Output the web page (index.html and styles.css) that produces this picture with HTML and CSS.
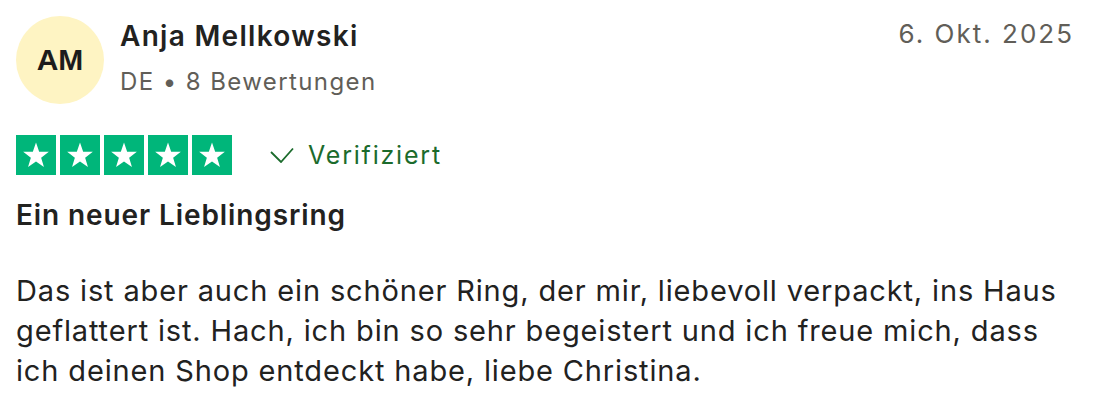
FILE: index.html
```html
<!DOCTYPE html>
<html lang="de">
<head>
  <meta charset="UTF-8">
  <meta name="viewport" content="width=device-width, initial-scale=1.0">
  <title>Bewertung</title>
  <link rel="stylesheet" href="styles.css">
</head>
<body>
  <article class="review">
    <div class="review-header">
      <div class="avatar">AM</div>
      <div class="reviewer">
        <div class="reviewer-name">Anja Mellkowski</div>
        <div class="reviewer-meta">DE &bull; 8 Bewertungen</div>
      </div>
      <time class="review-date">6. Okt. 2025</time>
    </div>

    <div class="rating-row">
      <div class="stars">
        <span class="star"><svg viewBox="0 0 40 40"><polygon points="20,7.5 23.17,16.63 32.84,16.83 25.14,22.67 27.94,31.92 20,26.4 12.06,31.92 14.86,22.67 7.16,16.83 16.83,16.63"/></svg></span>
        <span class="star"><svg viewBox="0 0 40 40"><polygon points="20,7.5 23.17,16.63 32.84,16.83 25.14,22.67 27.94,31.92 20,26.4 12.06,31.92 14.86,22.67 7.16,16.83 16.83,16.63"/></svg></span>
        <span class="star"><svg viewBox="0 0 40 40"><polygon points="20,7.5 23.17,16.63 32.84,16.83 25.14,22.67 27.94,31.92 20,26.4 12.06,31.92 14.86,22.67 7.16,16.83 16.83,16.63"/></svg></span>
        <span class="star"><svg viewBox="0 0 40 40"><polygon points="20,7.5 23.17,16.63 32.84,16.83 25.14,22.67 27.94,31.92 20,26.4 12.06,31.92 14.86,22.67 7.16,16.83 16.83,16.63"/></svg></span>
        <span class="star"><svg viewBox="0 0 40 40"><polygon points="20,7.5 23.17,16.63 32.84,16.83 25.14,22.67 27.94,31.92 20,26.4 12.06,31.92 14.86,22.67 7.16,16.83 16.83,16.63"/></svg></span>
      </div>
      <div class="verified">
        <svg class="check" viewBox="0 0 24 16"><path d="M1 5l10 10L23 1.5"/></svg>
        Verifiziert
      </div>
    </div>

    <h2 class="review-title">Ein neuer Lieblingsring</h2>
    <p class="review-text">Das ist aber auch ein schöner Ring, der mir, liebevoll verpackt, ins Haus geflattert ist. Hach, ich bin so sehr begeistert und ich freue mich, dass ich deinen Shop entdeckt habe, liebe Christina.</p>
  </article>
</body>
</html>
```

FILE: styles.css
```css
body {
  margin: 0;
  background: #fff;
  font-family: 'Inter', 'Liberation Sans', sans-serif;
  color: #22221f;
}

.review {
  padding: 16px 22px 0 16px;
}

.review-header {
  display: flex;
  align-items: flex-start;
  gap: 16px;
}

.avatar {
  width: 88px;
  height: 88px;
  border-radius: 50%;
  background: #fef4c3;
  display: flex;
  align-items: center;
  justify-content: center;
  font-family: 'Liberation Sans', Arial, sans-serif;
  font-weight: bold;
  font-size: 30px;
  color: #1c1c1c;
  flex-shrink: 0;
}

.reviewer-name {
  font-size: 28px;
  font-weight: 600;
  line-height: 40px;
  letter-spacing: 1.3px;
}

.reviewer-meta {
  margin-top: 10px;
  font-size: 24px;
  line-height: 32px;
  letter-spacing: 1.4px;
  color: #615e58;
}

.review-date {
  margin-left: auto;
  font-size: 26px;
  line-height: 36px;
  letter-spacing: 2px;
  color: #615e58;
}

.rating-row {
  display: flex;
  align-items: center;
  gap: 38px;
  margin-top: 31px;
}

.stars {
  display: flex;
  gap: 4px;
}

.star {
  width: 40px;
  height: 40px;
  background: #00b67a;
  display: block;
}

.star svg {
  width: 40px;
  height: 40px;
  display: block;
  fill: #fff;
}

.verified {
  display: flex;
  align-items: center;
  gap: 14px;
  font-size: 25px;
  letter-spacing: 1.8px;
  color: #1b6b2c;
}

.check {
  width: 24px;
  height: 16px;
  fill: none;
  stroke: #1b6b2c;
  stroke-width: 1.8;
}

.review-title {
  margin: 20px 0 0;
  font-size: 28px;
  font-weight: 600;
  line-height: 40px;
  letter-spacing: 0.9px;
}

.review-text {
  margin: 36px 0 0;
  font-size: 29px;
  line-height: 40px;
  letter-spacing: 0.85px;
}
```
